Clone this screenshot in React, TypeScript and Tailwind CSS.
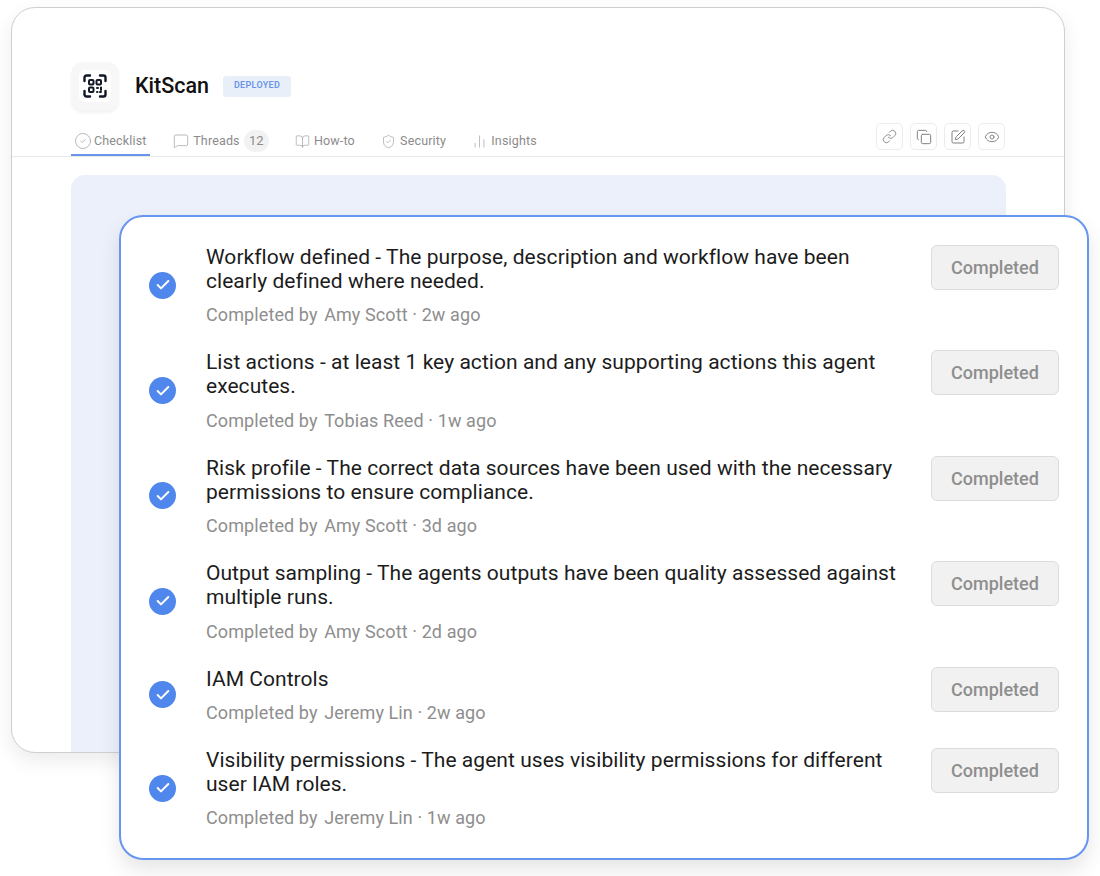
import { Link, Copy, SquarePen, Eye, MessageSquare, BookOpen, ShieldCheck, ChartNoAxesColumn, Check, CircleCheck } from "lucide-react";

const items = [
  { title: "Workflow defined - The purpose, description and workflow have been clearly defined where needed.", who: "Amy Scott", when: "2w ago" },
  { title: "List actions - at least 1 key action and any supporting actions this agent executes.", who: "Tobias Reed", when: "1w ago" },
  { title: "Risk profile - The correct data sources have been used with the necessary permissions to ensure compliance.", who: "Amy Scott", when: "3d ago" },
  { title: "Output sampling - The agents outputs have been quality assessed against multiple runs.", who: "Amy Scott", when: "2d ago" },
  { title: "IAM Controls", who: "Jeremy Lin", when: "2w ago" },
  { title: "Visibility permissions - The agent uses visibility permissions for different user IAM roles.", who: "Jeremy Lin", when: "1w ago" },
];

function QrLogo() {
  return (
    <svg width="24" height="24" viewBox="0 0 24 24" fill="none" stroke="#111827" strokeWidth="2.400" strokeLinecap="round">
      <path d="M1.500 7V3.500a2 2 0 0 1 2-2H7M17 1.500h3.500a2 2 0 0 1 2 2V7M22.500 17v3.500a2 2 0 0 1-2 2H17M7 22.500H3.500a2 2 0 0 1-2-2V17" />
      <rect x="6" y="6" width="4.500" height="4.500" rx="1" strokeWidth="2" />
      <rect x="13.500" y="6" width="4.500" height="4.500" rx="1" strokeWidth="2" />
      <rect x="6" y="13.500" width="4.500" height="4.500" rx="1" strokeWidth="2" />
      <path d="M14 14h1M18 13.500v2.500M14 18h.5M17 18h1" strokeWidth="2" />
    </svg>
  );
}

function Tab({ icon, label, active, count }: { icon: React.ReactNode; label: string; active?: boolean; count?: string }) {
  return (
    <div className={`flex h-[44px] items-center gap-[4px] border-b-2 pl-[3px] pt-[16px] text-[12.500px] tracking-[0.15px] text-[#8b8b8b] ${active ? "w-[79px] border-[#6b93ea]" : "border-transparent pr-[3px]"}`}>
      {icon}
      <span>{label}</span>
      {count && (
        <span className="flex h-[22px] w-[25px] items-center justify-center rounded-full bg-[#f2f2f2] text-[13px] tracking-normal text-[#8b8b8b]">{count}</span>
      )}
    </div>
  );
}

function ToolButton({ children }: { children: React.ReactNode }) {
  return (
    <div className="flex h-[27px] w-[27px] items-center justify-center rounded-[5px] border border-[#ececec] bg-white text-[#777777]">
      {children}
    </div>
  );
}

export default function App() {
  return (
    <div className="relative h-[876px] w-[1100px] overflow-hidden bg-white pl-[11px] pt-[7px] font-['Roboto',sans-serif]">
      {/* Back window */}
      <div className="h-[746px] w-[1054px] overflow-hidden rounded-[24px] border border-[#cfcfcf] bg-white shadow-[0_8px_20px_rgba(0,0,0,0.08)]">
        <div className="flex items-center pl-[59px] pt-[54px]">
          <div className="flex h-[48px] w-[48px] items-center justify-center rounded-[12px] bg-[#f7f7f7] shadow-[0_3px_3px_rgba(0,0,0,0.05)]">
            <div className="flex h-[32px] w-[32px] items-center justify-center rounded-[6px] bg-white">
              <QrLogo />
            </div>
          </div>
          <span className="ml-[16px] text-[21.500px] font-medium text-[#111111]">KitScan</span>
          <span className="ml-[14px] flex h-[21px] w-[68px] items-center justify-center rounded-[3px] bg-[#e9eff9] text-[9px] font-semibold tracking-[0.3px] text-[#6b93ea]">
            DEPLOYED
          </span>
        </div>

        <div className="mt-[2px] flex h-[45px] items-start justify-between border-b border-[#e8e8e8] px-[59px]">
          <div className="flex gap-[20.250px]">
            <Tab active label="Checklist" icon={<CircleCheck size={18} strokeWidth={0.900} color="#999999" className="-mr-[2px]" />} />
            <Tab label="Threads" count="12" icon={<MessageSquare size={16} strokeWidth={1} color="#999999" />} />
            <Tab label="How-to" icon={<BookOpen size={15} strokeWidth={1} color="#999999" />} />
            <Tab label="Security" icon={<ShieldCheck size={15} strokeWidth={1} color="#999999" />} />
            <Tab label="Insights" icon={<ChartNoAxesColumn size={15} strokeWidth={1} color="#999999" />} />
          </div>
          <div className="mt-[11px] flex gap-[7px]">
            <ToolButton><Link size={15} strokeWidth={1.300} /></ToolButton>
            <ToolButton><Copy size={16} strokeWidth={1.400} /></ToolButton>
            <ToolButton><SquarePen size={16} strokeWidth={1.400} /></ToolButton>
            <ToolButton><Eye size={16} strokeWidth={1.300} /></ToolButton>
          </div>
        </div>

        <div className="ml-[59px] mt-[18px] h-[600px] w-[935px] rounded-[14px] bg-[#ebf0fa]" />
      </div>

      {/* Checklist card on top */}
      <div className="absolute left-[119px] top-[215px] flex h-[645px] w-[970px] flex-col rounded-[24px] border-2 border-[#6795f0] bg-white px-[28px] pt-[28px] shadow-[0_10px_20px_rgba(0,0,0,0.10)]">
        {items.map((item) => (
          <div key={item.title} className="mb-[23px] flex items-center justify-between last:mb-0">
            <div className="flex items-center">
              <span className="mb-[2px] flex h-[27px] w-[27px] shrink-0 items-center justify-center rounded-full bg-[#5087ec]">
                <Check size={16} strokeWidth={3} color="#ffffff" />
              </span>
              <div className="ml-[30px] w-[696px]">
                <p className="text-[21px] leading-[24px] tracking-[0.045px] text-[#1c1c1c]">{item.title}</p>
                <p className="mt-[10.400px] text-[18px] leading-[24px] tracking-[0.1px] text-[#8e8e8e]">
                  Completed by <span className="ml-[2px]">{item.who}</span> · {item.when}
                </p>
              </div>
            </div>
            <div className="flex h-[45px] w-[128px] shrink-0 items-center justify-center self-start rounded-[6px] border border-[#dcdcdc] bg-[#f1f1f1] text-[18px] font-medium text-[#8e8e8e]">
              Completed
            </div>
          </div>
        ))}
      </div>
    </div>
  );
}
